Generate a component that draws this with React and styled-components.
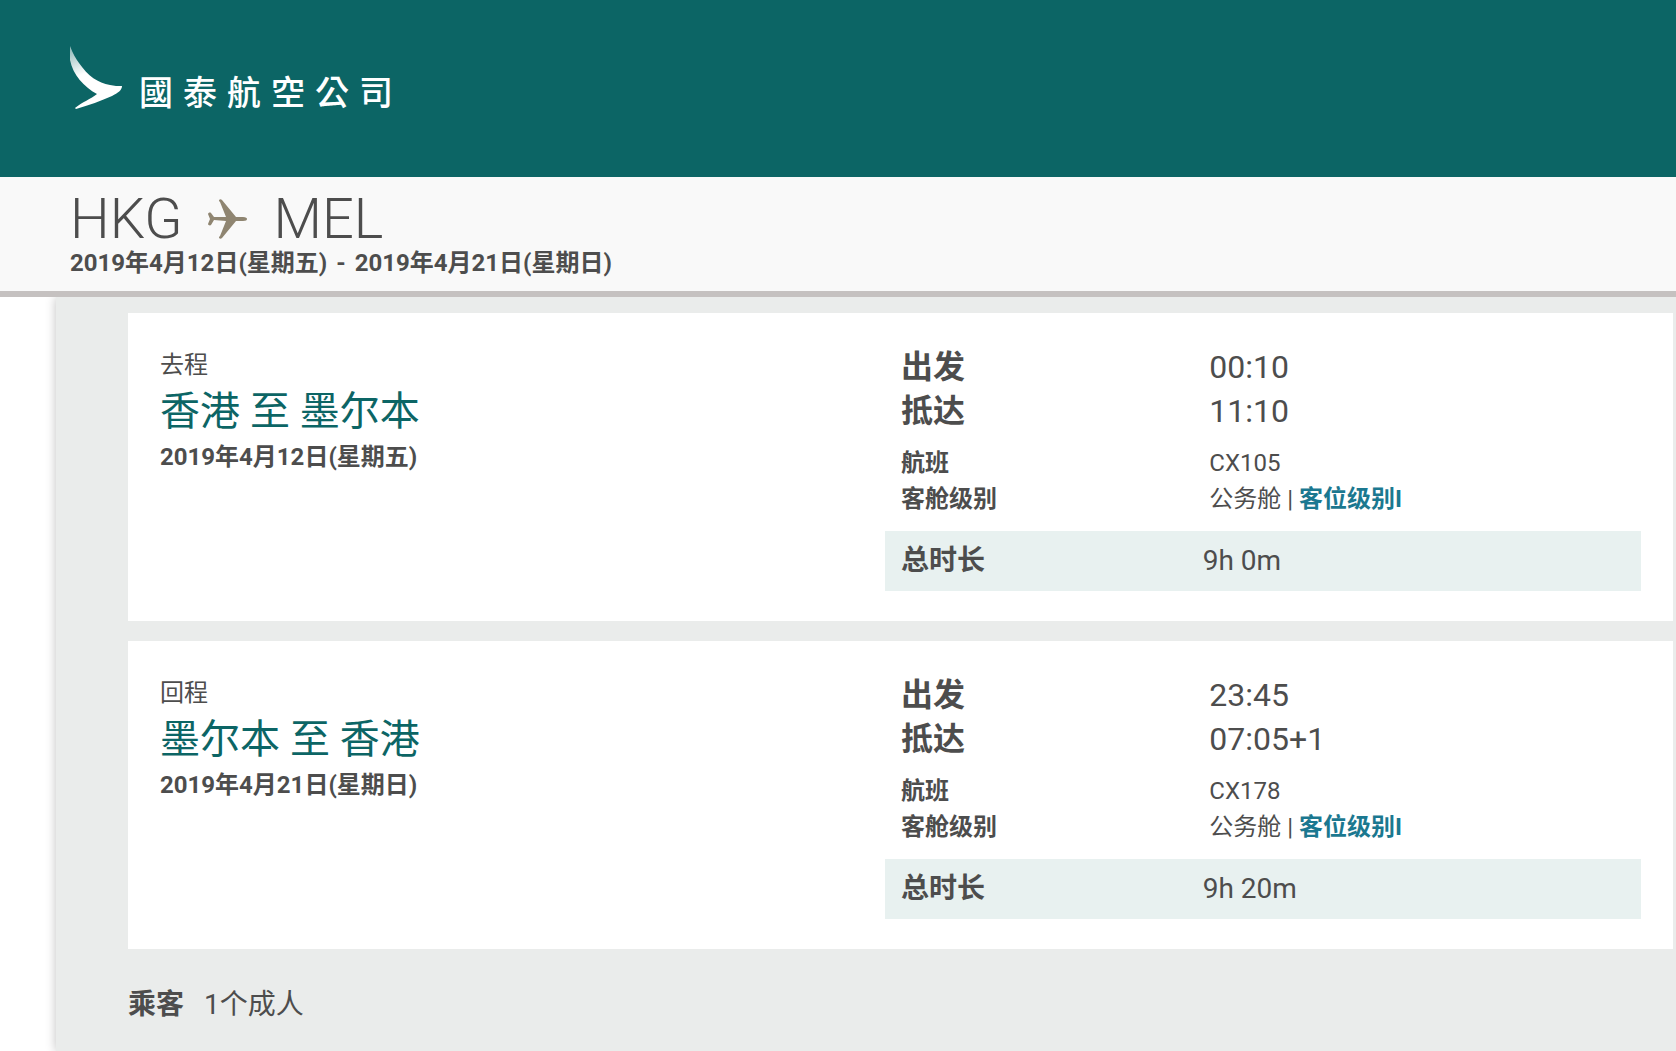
import React from "react";
import styled, { createGlobalStyle } from "styled-components";

const GlobalStyle = createGlobalStyle`
  * {
    box-sizing: border-box;
  }
  body {
    margin: 0;
    background-color: #fff;
    color: #4d4d4d;
    font-family: Roboto, "Noto Sans CJK SC", sans-serif;
    font-size: 24px;
  }
  h1, h2, p, dl, dd {
    margin: 0;
    font-weight: normal;
  }
`;

const Page = styled.div`
  display: flex;
  flex-direction: column;
  min-height: 100vh;
`;

const Header = styled.header`
  display: flex;
  background-color: #0c6565;
  padding: 46px 70px 67px;
`;

const LogoLink = styled.a`
  display: flex;
  align-items: flex-end;
  gap: 16px;
  color: #fff;
  text-decoration: none;
`;

const LogoText = styled.span`
  display: flex;
  gap: 10px;
  font-family: "Noto Sans CJK TC", sans-serif;
  font-size: 34px;
  font-weight: 500;
  line-height: 38px;
`;

const Summary = styled.section`
  position: relative;
  z-index: 1;
  background-color: #f9f9f9;
  border-bottom: 6px solid #c5c1c0;
  padding: 12px 70px 14px;
`;

const Route = styled.h1`
  display: flex;
  align-items: center;
  gap: 26px;
  font-size: 56px;
  font-weight: 300;
  line-height: 60px;
`;

const TripDates = styled.p`
  display: flex;
  gap: 9px;
  font-weight: 700;
  line-height: 28px;
`;

const TripDate = styled.p`
  font-weight: 700;
  line-height: 36px;
`;

const Panel = styled.main`
  flex: 1;
  display: flex;
  flex-direction: column;
  gap: 20px;
  margin-left: 56px;
  padding: 16px 3px 24px 72px;
  background-color: #eaeceb;
  box-shadow: 0 0 10px rgba(0, 0, 0, 0.25);
`;

const Card = styled.section`
  display: grid;
  grid-template-columns: 725fr 756fr;
  padding: 32px 32px 30px;
  background-color: #fff;
`;

const Direction = styled.p`
  line-height: 40px;
`;

const Cities = styled.h2`
  color: #0c6565;
  font-size: 40px;
  line-height: 54px;
`;

const Details = styled.dl`
  padding-left: 16px;
`;

const Row = styled.div`
  display: grid;
  grid-template-columns: 5fr 7fr;
  font-size: ${(props) => (props.$large ? 32 : 24)}px;
  line-height: ${(props) => (props.$large ? 44 : 36)}px;
`;

const Flight = styled.div`
  padding: 12px 0 14px;
`;

const Label = styled.dt`
  font-weight: 700;
`;

const Duration = styled.dl`
  display: grid;
  grid-template-columns: 5fr 7fr;
  padding: 0 16px;
  background-color: #e8f1f0;
  font-size: 28px;
  line-height: 60px;
`;

const FareLink = styled.a`
  color: #1b7890;
  font-weight: 700;
  text-decoration: none;
`;

const Passengers = styled.dl`
  display: flex;
  gap: 20px;
  padding-top: 16px;
  font-size: 28px;
  line-height: 40px;
`;

const trips = [
  {
    direction: "去程",
    cities: "香港 至 墨尔本",
    date: "2019年4月12日(星期五)",
    departs: "00:10",
    arrives: "11:10",
    flight: "CX105",
    duration: "9h 0m",
  },
  {
    direction: "回程",
    cities: "墨尔本 至 香港",
    date: "2019年4月21日(星期日)",
    departs: "23:45",
    arrives: "07:05+1",
    flight: "CX178",
    duration: "9h 20m",
  },
];

function Wing() {
  return (
    <svg width="53" height="64" viewBox="0 0 53 64" aria-hidden="true">
      <defs>
        <linearGradient id="wing" x1="0.1" y1="0" x2="0.25" y2="0.45">
          <stop offset="0" stopColor="#fff" stopOpacity="0.55" />
          <stop offset="1" stopColor="#fff" />
        </linearGradient>
      </defs>
      <path
        fill="url(#wing)"
        d="M0 0C3 8 6 13 9 17C18 30 28 37 40 39C44 40 48 40 52 40C52 44 48 47 42 50C31 55 19 59 6 63L5 62C12 56 21 53 27 48C14 41 3 29 0 14Z"
      />
    </svg>
  );
}

function Plane() {
  return (
    <svg width="39" height="40" viewBox="0 0 39 40" aria-hidden="true">
      <path
        fill="#8f8571"
        d="M11 1C12 0 13 0 14 1L28 18L35 18C38 18 39 19 39 20C39 21 38 22 35 22L28 22L14 39C13 40 12 40 11 39C11 38 11 38 12 37L18 22L6 21L3 26C2 27 0 26 0 25L2 20L0 15C0 14 2 13 3 14L6 18L18 18L12 3C11 2 11 2 11 1Z"
      />
    </svg>
  );
}

function Trip({ trip }) {
  return (
    <Card>
      <div>
        <Direction>{trip.direction}</Direction>
        <Cities>{trip.cities}</Cities>
        <TripDate>{trip.date}</TripDate>
      </div>
      <div>
        <Details>
          <Row $large>
            <Label>出发</Label>
            <dd>{trip.departs}</dd>
          </Row>
          <Row $large>
            <Label>抵达</Label>
            <dd>{trip.arrives}</dd>
          </Row>
          <Flight>
            <Row>
              <Label>航班</Label>
              <dd>{trip.flight}</dd>
            </Row>
            <Row>
              <Label>客舱级别</Label>
              <dd>
                公务舱 | <FareLink href="#fare">客位级别I</FareLink>
              </dd>
            </Row>
          </Flight>
        </Details>
        <Duration>
          <Label>总时长</Label>
          <dd>{trip.duration}</dd>
        </Duration>
      </div>
    </Card>
  );
}

function App() {
  return (
    <Page>
      <GlobalStyle />
      <Header>
        <LogoLink href="#home">
          <Wing />
          <LogoText>
            {[..."國泰航空公司"].map((char) => (
              <span key={char}>{char}</span>
            ))}
          </LogoText>
        </LogoLink>
      </Header>
      <Summary>
        <Route>
          <span>HKG</span>
          <Plane />
          <span>MEL</span>
        </Route>
        <TripDates>
          <span>{trips[0].date}</span>
          <span>-</span>
          <span>{trips[1].date}</span>
        </TripDates>
      </Summary>
      <Panel>
        {trips.map((trip) => (
          <Trip key={trip.flight} trip={trip} />
        ))}
        <Passengers>
          <Label>乘客</Label>
          <dd>1个成人</dd>
        </Passengers>
      </Panel>
    </Page>
  );
}

export default App;
